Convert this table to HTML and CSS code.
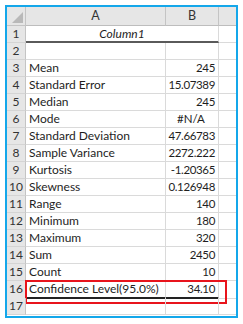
FILE: index.html
```html
<!DOCTYPE html>
<html>
<head>
<meta charset="utf-8">
<link rel="stylesheet" href="styles.css">
</head>
<body>
<div class="frame">
  <div class="sheet">
    <div class="row head">
      <div class="rn corner"><svg class="tri" width="11" height="11" viewBox="0 0 11 11"><polygon points="11,0 11,11 0,11" fill="#b9b9b9"/></svg></div>
      <div class="ch">A</div>
      <div class="ch">B</div>
      <div class="ch last"></div>
    </div>
    <div class="row r1">
      <div class="rn">1</div>
      <div class="c span2 title">Column1</div>
      <div class="c last"></div>
    </div>
    <div class="row">
      <div class="rn">2</div><div class="c"></div><div class="c"></div><div class="c last"></div>
    </div>
    <div class="row"><div class="rn">3</div><div class="c">Mean</div><div class="c num">245</div><div class="c last"></div></div>
    <div class="row"><div class="rn">4</div><div class="c">Standard Error</div><div class="c num">15.07389</div><div class="c last"></div></div>
    <div class="row"><div class="rn">5</div><div class="c">Median</div><div class="c num">245</div><div class="c last"></div></div>
    <div class="row"><div class="rn">6</div><div class="c">Mode</div><div class="c num ctr">#N/A</div><div class="c last"></div></div>
    <div class="row"><div class="rn">7</div><div class="c">Standard Deviation</div><div class="c num">47.66783</div><div class="c last"></div></div>
    <div class="row"><div class="rn">8</div><div class="c">Sample Variance</div><div class="c num">2272.222</div><div class="c last"></div></div>
    <div class="row"><div class="rn">9</div><div class="c">Kurtosis</div><div class="c num">-1.20365</div><div class="c last"></div></div>
    <div class="row"><div class="rn">10</div><div class="c">Skewness</div><div class="c num">0.126948</div><div class="c last"></div></div>
    <div class="row"><div class="rn">11</div><div class="c">Range</div><div class="c num">140</div><div class="c last"></div></div>
    <div class="row"><div class="rn">12</div><div class="c">Minimum</div><div class="c num">180</div><div class="c last"></div></div>
    <div class="row"><div class="rn">13</div><div class="c">Maximum</div><div class="c num">320</div><div class="c last"></div></div>
    <div class="row"><div class="rn">14</div><div class="c">Sum</div><div class="c num">2450</div><div class="c last"></div></div>
    <div class="row"><div class="rn">15</div><div class="c">Count</div><div class="c num">10</div><div class="c last"></div></div>
    <div class="row r16">
      <div class="rn">16</div><div class="c ul">Confidence Level(95.0%)</div><div class="c num ul">34.10</div><div class="c last"></div>
      <div class="hl"></div>
    </div>
    <div class="row"><div class="rn">17</div><div class="c"></div><div class="c"></div><div class="c last"></div></div>
  </div>
</div>
</body>
</html>
```
FILE: styles.css
```css
html, body {
  margin: 0;
  padding: 0;
  background: #ffffff;
}
.frame {
  position: absolute;
  left: 5px;
  top: 5px;
  width: 229px;
  height: 309px;
  border: 2px solid #14a7ea;
  overflow: hidden;
  background: #fff;
}
.sheet {
  font-family: Lato, "Liberation Sans", sans-serif;
  font-size: 12px;
  color: #1e1e1e;
}
.row {
  display: grid;
  grid-template-columns: 19px 140px 53px 1fr;
  height: 17px;
  position: relative;
}
.row.head {
  height: 19px;
  background: #e6e6e6;
}
.rn {
  background: #e6e6e6;
  border-right: 1px solid #c4c4c4;
  border-bottom: 1px solid #d4d4d4;
  text-align: center;
  line-height: 16px;
  color: #333;
  box-sizing: border-box;
}
.corner {
  position: relative;
  border-bottom: 1px solid #c4c4c4;
}
.tri {
  position: absolute;
  right: 2px;
  bottom: 2px;
}
.ch {
  border-right: 1px solid #c4c4c4;
  border-bottom: 1px solid #bdbdbd;
  text-align: center;
  line-height: 18px;
  font-size: 12.5px;
  color: #333;
  box-sizing: border-box;
}
.ch.last { border-right: none; }
.c {
  border-right: 1px solid #dadada;
  border-bottom: 1px solid #dadada;
  box-sizing: border-box;
  line-height: 16px;
  padding: 0 3px;
  white-space: nowrap;
  overflow: visible;
}
.c.last { border-right: none; }
.num {
  text-align: right;
  font-size: 11.5px;
  letter-spacing: -0.35px;
  padding: 0 3px 0 1px;
}
.num.ctr { text-align: center; letter-spacing: 0; }
.span2 { grid-column: span 2; }
.title {
  font-style: italic;
  text-align: center;
  border-bottom: 2px solid #5a5a5a;
  line-height: 15px;
}
.ul {
  border-bottom: 2px solid #222;
}
.hl {
  position: absolute;
  left: 18px;
  top: -1px;
  width: 202px;
  height: 24px;
  border: 2px solid #e8141c;
  box-sizing: border-box;
  pointer-events: none;
}
```
